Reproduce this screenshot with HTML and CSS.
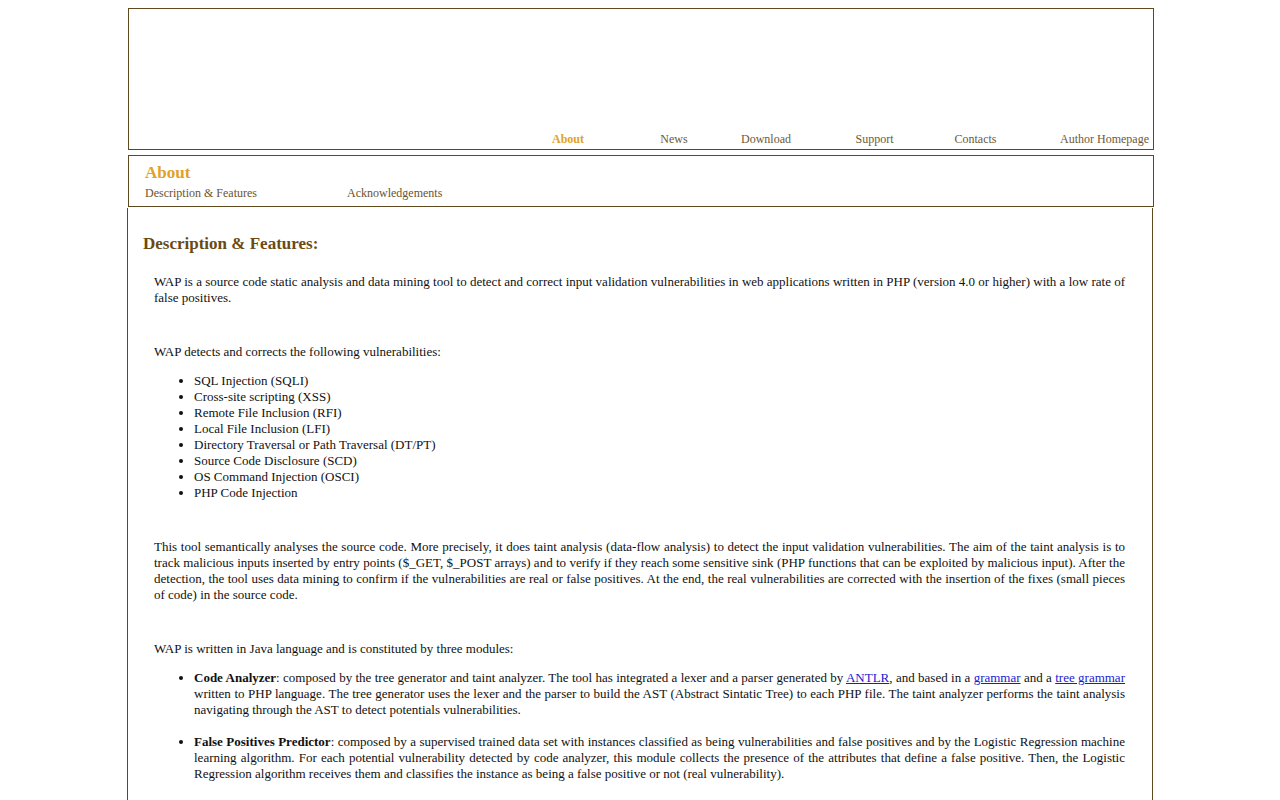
FILE: index.html
```html
<!DOCTYPE html>
<html>
<head>
<meta charset="utf-8">
<title>WAP - About</title>
<link rel="stylesheet" href="styles.css">
</head>
<body>
<div class="page">
  <header class="header">
    <nav class="nav">
      <span class="nav-spacer"></span>
      <a class="nav-item active" href="#">About</a>
      <a class="nav-item" href="#">News</a>
      <a class="nav-item" href="#">Download</a>
      <a class="nav-item" href="#">Support</a>
      <a class="nav-item" href="#">Contacts</a>
      <a class="nav-item last" href="#">Author Homepage</a>
    </nav>
  </header>
  <section class="subbar">
    <div class="subbar-title">About</div>
    <div class="subbar-links">
      <a class="sub-link first" href="#">Description &amp; Features</a>
      <a class="sub-link" href="#">Acknowledgements</a>
    </div>
  </section>
  <main class="content">
    <h2 class="section-title">Description &amp; Features:</h2>
    <div class="body">
      <p class="block">WAP is a source code static analysis and data mining tool to detect and correct input validation vulnerabilities in web applications written in PHP (version 4.0 or higher) with a low rate of false positives.</p>
      <p class="lead">WAP detects and corrects the following vulnerabilities:</p>
      <ul class="vuln-list block">
        <li>SQL Injection (SQLI)</li>
        <li>Cross-site scripting (XSS)</li>
        <li>Remote File Inclusion (RFI)</li>
        <li>Local File Inclusion (LFI)</li>
        <li>Directory Traversal or Path Traversal (DT/PT)</li>
        <li>Source Code Disclosure (SCD)</li>
        <li>OS Command Injection (OSCI)</li>
        <li>PHP Code Injection</li>
      </ul>
      <p class="block">This tool semantically analyses the source code. More precisely, it does taint analysis (data-flow analysis) to detect the input validation vulnerabilities. The aim of the taint analysis is to track malicious inputs inserted by entry points ($_GET, $_POST arrays) and to verify if they reach some sensitive sink (PHP functions that can be exploited by malicious input). After the detection, the tool uses data mining to confirm if the vulnerabilities are real or false positives. At the end, the real vulnerabilities are corrected with the insertion of the fixes (small pieces of code) in the source code.</p>
      <p class="lead">WAP is written in Java language and is constituted by three modules:</p>
      <ul class="module-list">
        <li><b>Code Analyzer</b>: composed by the tree generator and taint analyzer. The tool has integrated a lexer and a parser generated by <a href="#">ANTLR</a>, and based in a <a href="#">grammar</a> and a <a href="#">tree grammar</a> written to PHP language. The tree generator uses the lexer and the parser to build the AST (Abstract Sintatic Tree) to each PHP file. The taint analyzer performs the taint analysis navigating through the AST to detect potentials vulnerabilities.</li>
        <li><b>False Positives Predictor</b>: composed by a supervised trained data set with instances classified as being vulnerabilities and false positives and by the Logistic Regression machine learning algorithm. For each potential vulnerability detected by code analyzer, this module collects the presence of the attributes that define a false positive. Then, the Logistic Regression algorithm receives them and classifies the instance as being a false positive or not (real vulnerability).</li>
        <li><b>Code Corrector</b>: benefits from the AST created by the tree generator and from the false positives predictor output. For each real vulnerability detected, this module identifies the fix to apply and inserts it in the right place of the source code.</li>
      </ul>
    </div>
  </main>
</div>
</body>
</html>
```

FILE: styles.css
```css
html, body {
  margin: 0;
  padding: 0;
  background: #ffffff;
}

body {
  padding-top: 8px;
  font-family: "Liberation Serif", "Times New Roman", serif;
  font-size: 13px;
  color: #111111;
}

.page {
  width: 1026px;
  margin: 0 auto;
}

.header {
  box-sizing: border-box;
  height: 142px;
  margin-left: 1px;
  width: 1026px;
  border: 1px solid #5e4a1e;
  display: flex;
  flex-direction: column;
  justify-content: flex-end;
}

.nav {
  display: grid;
  grid-template-columns: 387px 104px 108px 76px 141px 61px 1fr;
  height: 18px;
  align-items: center;
  margin-bottom: 1px;
}

.nav-item {
  font-size: 12px;
  color: #6b5a3a;
  text-decoration: none;
  text-align: center;
  line-height: 14px;
}

.nav-item.active {
  color: #e0a227;
  font-weight: bold;
}

.nav-item.last {
  text-align: right;
  padding-right: 4px;
}

.subbar {
  box-sizing: border-box;
  margin-top: 5px;
  margin-left: 1px;
  width: 1026px;
  height: 52px;
  border: 1px solid #5e4a1e;
  padding: 7px 0 0 16px;
}

.subbar-title {
  font-size: 17px;
  font-weight: bold;
  color: #e0a227;
  line-height: 20px;
}

.subbar-links {
  display: flex;
  margin-top: 3px;
}

.sub-link {
  font-size: 12px;
  color: #6a5430;
  text-decoration: none;
  line-height: 14px;
}

.sub-link.first {
  width: 202px;
}

.content {
  box-sizing: border-box;
  width: 1026px;
  min-height: 600px;
  margin-top: 1px;
  border-left: 1px solid #5e4a1e;
  border-right: 1px solid #5e4a1e;
  border-bottom: 1px solid #5e4a1e;
  padding: 26px 27px 20px 15px;
}

.section-title {
  margin: 0;
  font-size: 17px;
  line-height: 20px;
  font-weight: bold;
  color: #6b4a13;
}

.body {
  padding-left: 11px;
  margin-top: 20px;
  line-height: 16px;
  text-align: justify;
}

.body p {
  margin: 0;
}

.block {
  margin-bottom: 38px !important;
}

.lead {
  margin-bottom: 13px !important;
}

.vuln-list,
.module-list {
  margin: 0;
  padding-left: 40px;
}

.module-list li {
  margin-bottom: 16px;
}

.body a {
  color: #1a1ad0;
}
```
